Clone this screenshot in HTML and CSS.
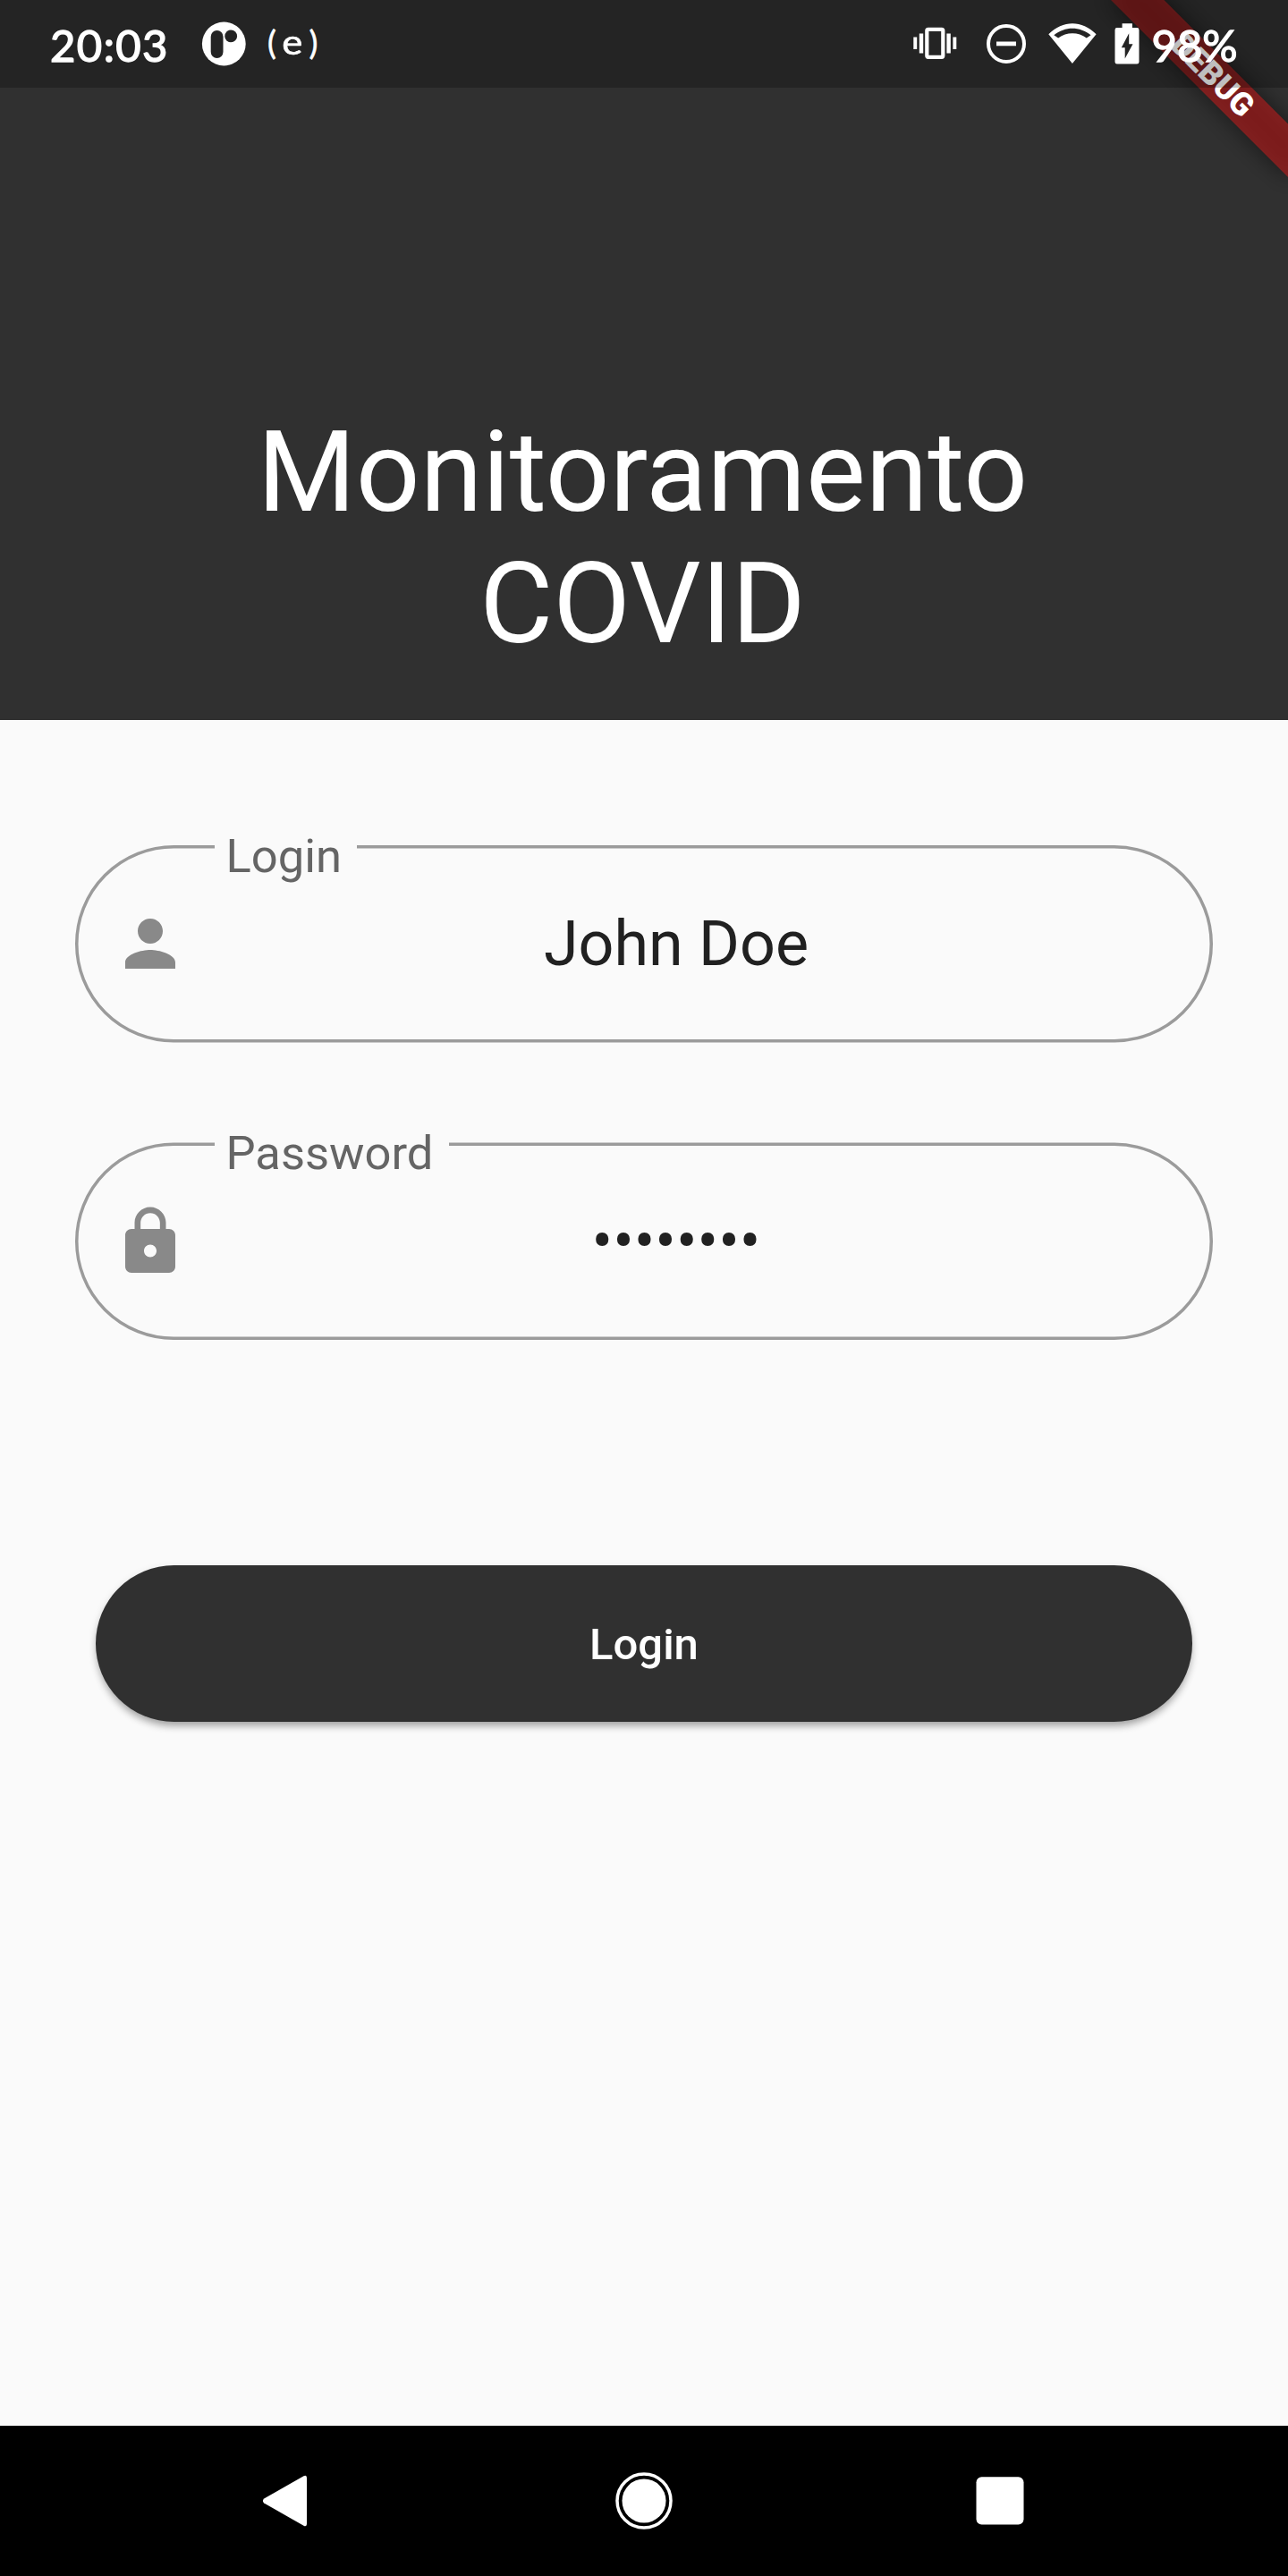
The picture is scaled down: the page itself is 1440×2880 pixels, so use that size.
FILE: index.html
```html
<!DOCTYPE html>
<html lang="pt">
<head>
<meta charset="utf-8">
<title>Monitoramento COVID</title>
<link rel="stylesheet" href="styles.css">
</head>
<body>
<div class="screen">
  <div class="debug-banner"><span>DEBUG</span></div>
  <div class="status-bar">
    <span class="clock">20:03</span>
    <svg class="app-icon" width="50" height="50" viewBox="225 24 50 50"><circle cx="250.3" cy="49" r="24.4" fill="#fff"/><rect x="235.7" y="34" width="13.8" height="31" rx="6.9" fill="#242424"/><circle cx="258.2" cy="40.4" r="6.9" fill="#242424"/></svg>
    <span class="carrier">(<b>e</b>)</span>
    <div class="system-icons">
      <svg width="50" height="50" viewBox="1020 24 50 50" fill="#fff"><path d="M1021.3 41.5h3.9v13.6h-3.9zM1027.8 37.5h4.4v22h-4.4zM1058.4 37.5h4.4v22h-4.4zM1065.4 41.5h3.9v13.6h-3.9z"/><rect x="1036.3" y="32.8" width="18" height="31" rx="1.5" fill="none" stroke="#fff" stroke-width="4.2"/></svg>
      <svg class="dnd" width="46" height="50" viewBox="1102 24 46 50" fill="#fff"><circle cx="1125" cy="49" r="20" fill="none" stroke="#fff" stroke-width="4"/><path d="M1114 46.5h22v4.8h-22z"/></svg>
      <svg class="wifi" width="54" height="50" viewBox="1171.500 24 54 50" fill="#fff" fill-rule="evenodd"><path d="M1171.8 38.3C1188 22.3 1209 22.3 1225.1 38.3L1198.4 71zM1177.8 39.3L1182.6 42.6C1192 35.5 1205 35.5 1214.3 42.6L1219.1 39.3C1206.5 29.3 1190.4 29.3 1177.8 39.3z"/></svg>
      <svg class="battery" width="28" height="50" viewBox="1245.5 24 28 50" fill="#fff" fill-rule="evenodd"><path d="M1254.1 26.3h11.3v4.7h5.2a2.4 2.4 0 0 1 2.4 2.4v35.8a2.4 2.4 0 0 1-2.4 2.4h-22.2a2.4 2.4 0 0 1-2.4-2.4V33.4a2.4 2.4 0 0 1 2.4-2.4h5.7zM1261.7 37.3L1253.3 53.3h3.9v12.2L1266 49.3h-4.3z"/></svg>
      <span class="percent">98%</span>
    </div>
  </div>
  <header class="app-header"><h1>Monitoramento<br>COVID</h1></header>
  <main class="login-form">
    <label class="field">
      <svg class="outline" width="1272" height="221" viewBox="0 0 1272 221"><rect x="1.75" y="1.75" width="1268.5" height="217" rx="108.5"/></svg>
      <span class="caption">Login</span>
      <svg class="field-icon" width="84" height="84" viewBox="0 0 24 24"><path d="M12 12c2.210 0 4-1.790 4-4s-1.790-4-4-4-4 1.790-4 4 1.790 4 4 4zm0 2c-2.670 0-8 1.340-8 4v2h16v-2c0-2.660-5.330-4-8-4z"/></svg>
      <span class="value">John Doe</span>
    </label>
    <label class="field password">
      <svg class="outline" width="1272" height="221" viewBox="0 0 1272 221"><rect x="1.75" y="2.25" width="1268.5" height="217" rx="108.5"/></svg>
      <span class="caption">Password</span>
      <svg class="field-icon" width="84" height="84" viewBox="0 0 24 24"><path d="M18 8h-1V6c0-2.760-2.240-5-5-5S7 3.240 7 6v2H6c-1.100 0-2 .9-2 2v10c0 1.100.9 2 2 2h12c1.100 0 2-.9 2-2V10c0-1.100-.9-2-2-2zm-6 9c-1.100 0-2-.9-2-2s.9-2 2-2 2 .9 2 2-.9 2-2 2zm3.100-9H8.900V6c0-1.710 1.390-3.100 3.100-3.100 1.710 0 3.100 1.390 3.100 3.100v2z"/></svg>
      <span class="value">••••••••</span>
    </label>
    <button class="submit" type="button">Login</button>
  </main>
  <nav class="nav-bar">
    <svg width="64" height="64" viewBox="0 0 64 64" fill="#fff"><path d="M6.200 29.500L50.500 4.300Q54 2.500 54 7V57Q54 61.500 50.500 59.700L6.200 34.500Q3.500 32 6.200 29.500z"/></svg>
    <svg width="64" height="64" viewBox="0 0 64 64" fill="#fff"><circle cx="32" cy="32" r="24.5"/><circle cx="32" cy="32" r="30" fill="none" stroke="#fff" stroke-width="3.5"/></svg>
    <svg width="64" height="64" viewBox="0 0 64 64" fill="#fff"><rect x="4.500" y="5.300" width="53" height="53.200" rx="6"/></svg>
  </nav>
</div>
</body>
</html>
```
FILE: styles.css
```css
* { box-sizing: border-box; }
body { margin: 0; font-family: Roboto, sans-serif; }
.screen {
  position: relative;
  display: flex;
  flex-direction: column;
  width: 1440px;
  height: 2880px;
  background: #fafafa;
  overflow: hidden;
}
svg { display: block; flex: none; }

/* Status bar, drawn as a translucent layer over the header */
.status-bar {
  position: relative;
  z-index: 2;
  display: flex;
  align-items: center;
  height: 98px;
  padding: 0 57px 0 56px;
  background: rgba(0, 0, 0, .25);
  color: #fff;
  font: 49px/98px Lato, sans-serif;
}
.clock { width: 169px; padding-top: 2px; letter-spacing: 1.4px; -webkit-text-stroke: 1.4px #fff; }
.carrier { margin-left: 24px; padding-bottom: 5px; font-size: 37px; letter-spacing: 8px; -webkit-text-stroke: .6px #fff; }
.carrier b { display: inline-block; font-size: 39px; font-weight: 400; line-height: 1; transform: scaleX(1.12); }
.system-icons { display: flex; align-items: center; margin-left: auto; }
.dnd { margin-left: 31.5px; }
.wifi { margin-left: 24px; }
.battery { margin-left: 20px; }
.percent { width: 95.5px; margin-left: 14px; padding-top: 2px; -webkit-text-stroke: 1.4px #fff; }

.debug-banner {
  position: absolute;
  z-index: 1;
  top: 98px;
  left: 1300px;
  width: 280px;
  height: 42px;
  transform: rotate(45deg);
  transform-origin: 140px -98px;
  color: #fff;
  font-size: 35.7px;
  font-weight: 900;
  line-height: 42px;
  text-align: center;
}
.debug-banner::before {
  content: "";
  position: absolute;
  inset: 0;
  background: rgba(0, 0, 0, .5);
  filter: blur(12.6px);
}
.debug-banner span { position: absolute; inset: 0; background: rgba(183, 28, 28, .627); }

.app-header {
  display: flex;
  flex-direction: column;
  justify-content: flex-end;
  height: 805px;
  margin-top: -98px;
  padding: 0 3px 56px 0;
  background: #303030;
}
h1 { margin: 0; color: #fff; font-size: 126px; font-weight: 400; line-height: 147px; text-align: center; }

.login-form { display: flex; flex: 1; flex-direction: column; padding: 140px 84px 0; }
.field {
  position: relative;
  display: flex;
  align-items: center;
  height: 221px;
  padding: 0 42px;
}
.outline { position: absolute; inset: 0; fill: none; stroke: #9b9b9b; stroke-width: 3.5px; }
.caption {
  position: absolute;
  top: -19px;
  left: 156px;
  padding: 0 17.5px 0 12.5px;
  background: #fafafa;
  color: #656565;
  font-size: 52.5px;
  line-height: 62px;
}
.field-icon { margin-bottom: 1px; fill: #898989; }
.value { flex: 1; padding: 0 12px 2px 0; color: #212121; font-size: 70px; line-height: 82px; text-align: center; }
.password { margin-top: 111px; }
.password .field-icon { margin-bottom: 0; }
.submit {
  height: 175px;
  margin: 252px 23.4px 0;
  padding: 2px 0 0;
  border: 0;
  border-radius: 88px;
  background: #303030;
  box-shadow: 0 7px 10px -3px rgba(0, 0, 0, .3), 0 3px 10px rgba(0, 0, 0, .13);
  color: #fff;
  font: 500 49px/58px Roboto, sans-serif;
}

.nav-bar { display: flex; align-items: center; justify-content: space-between; height: 168px; padding: 0 289px; background: #000; }
```
